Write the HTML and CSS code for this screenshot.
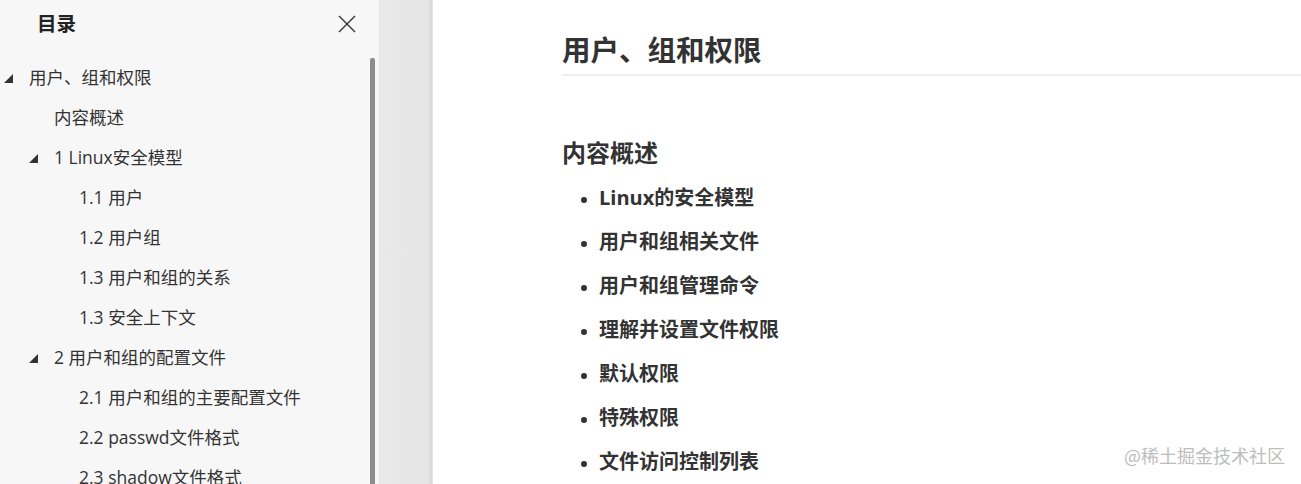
FILE: index.html
```html
<!DOCTYPE html>
<html lang="zh-CN">
<head>
<meta charset="utf-8">
<link rel="stylesheet" href="styles.css">
</head>
<body>
<div class="app">
  <aside class="sidebar">
    <div class="side-head">
      <span class="side-title">目录</span>
      <svg class="close" width="18" height="18" viewBox="0 0 18 18"><path d="M1 1L17 17M17 1L1 17" stroke="#333" stroke-width="1.4" fill="none"/></svg>
    </div>
    <div class="toc-wrap">
      <ul class="toc">
        <li class="l1 open"><span class="tri"></span>用户、组和权限</li>
        <li class="l2">内容概述</li>
        <li class="l2 open"><span class="tri"></span>1 Linux安全模型</li>
        <li class="l3">1.1 用户</li>
        <li class="l3">1.2 用户组</li>
        <li class="l3">1.3 用户和组的关系</li>
        <li class="l3">1.3 安全上下文</li>
        <li class="l2 open"><span class="tri"></span>2 用户和组的配置文件</li>
        <li class="l3">2.1 用户和组的主要配置文件</li>
        <li class="l3">2.2 passwd文件格式</li>
        <li class="l3">2.3 shadow文件格式</li>
      </ul>
      <div class="scrollbar"></div>
    </div>
  </aside>
  <div class="gutter"></div>
  <main class="content">
    <h1>用户、组和权限</h1>
    <h2>内容概述</h2>
    <ul class="list">
      <li>Linux的安全模型</li>
      <li>用户和组相关文件</li>
      <li>用户和组管理命令</li>
      <li>理解并设置文件权限</li>
      <li>默认权限</li>
      <li>特殊权限</li>
      <li>文件访问控制列表</li>
    </ul>
    <div class="watermark">@稀土掘金技术社区</div>
  </main>
</div>
</body>
</html>
```

FILE: styles.css
```css
* { box-sizing: border-box; }
html, body { margin: 0; padding: 0; height: 100%; overflow: hidden; }
body {
  font-family: "Open Sans", "Noto Sans CJK SC", sans-serif;
  color: #333;
  background: #fff;
}
.app { display: flex; height: 484px; }
.sidebar {
  width: 380px;
  flex: none;
  background: #f7f7f7;
  border-right: 1px solid #e2e2e2;
  display: flex;
  flex-direction: column;
}
.side-head {
  height: 46px;
  display: flex;
  align-items: center;
  justify-content: space-between;
  padding: 0 23px 0 37px;
}
.side-title {
  font-size: 19.5px;
  font-weight: 700;
  color: #222;
  position: relative;
  top: -1px;
}
.close { display: block; position: relative; top: 1px; }
.toc-wrap { display: flex; flex: 1; min-height: 0; }
.toc {
  list-style: none;
  margin: 0;
  padding: 11px 0 0 0;
  flex: 1;
}
.toc li {
  height: 40px;
  line-height: 40px;
  font-size: 17.5px;
  color: #333;
  white-space: nowrap;
  display: flex;
  align-items: center;
}
.toc .l1 { padding-left: 29px; }
.toc .l2 { padding-left: 54px; }
.toc .l3 { padding-left: 79px; }
.tri {
  width: 0; height: 0;
  border-left: 9px solid transparent;
  border-bottom: 9px solid #333;
  margin-left: -25px;
  margin-right: 16px;
  position: relative;
  top: 1px;
}
.scrollbar {
  width: 5px;
  background: #8c8c8c;
  margin: 12px 4px 0 0;
  border-radius: 2px 2px 0 0;
  flex: none;
}
.gutter {
  width: 53px;
  flex: none;
  background: linear-gradient(to right, #e9e9e9 0%, #e6e6e6 60%, #e4e4e4 90%, #d8d8d8 97%, #ececec 100%);
}
.content {
  flex: 1;
  padding: 0 0 0 129px;
  position: relative;
}
.content h1 {
  margin: 0;
  padding: 31px 0 5px;
  font-size: 28.5px;
  font-weight: 700;
  line-height: 38px;
  color: #333;
  border-bottom: 2px solid #eee;
}
.content h2 {
  margin: 60px 0 0;
  font-size: 24px;
  font-weight: 700;
  line-height: 34px;
  color: #333;
}
.list {
  margin: 14px 0 0;
  padding: 0 0 0 37px;
}
.list li {
  font-size: 20px;
  font-weight: 700;
  line-height: 28px;
  margin-bottom: 16px;
  color: #333;
}
.list li::marker { font-size: 16px; }
.watermark {
  position: absolute;
  right: 16px;
  bottom: 16px;
  font-size: 18px;
  color: #bdbdbd;
  font-family: "Noto Sans CJK SC", sans-serif;
}
```
